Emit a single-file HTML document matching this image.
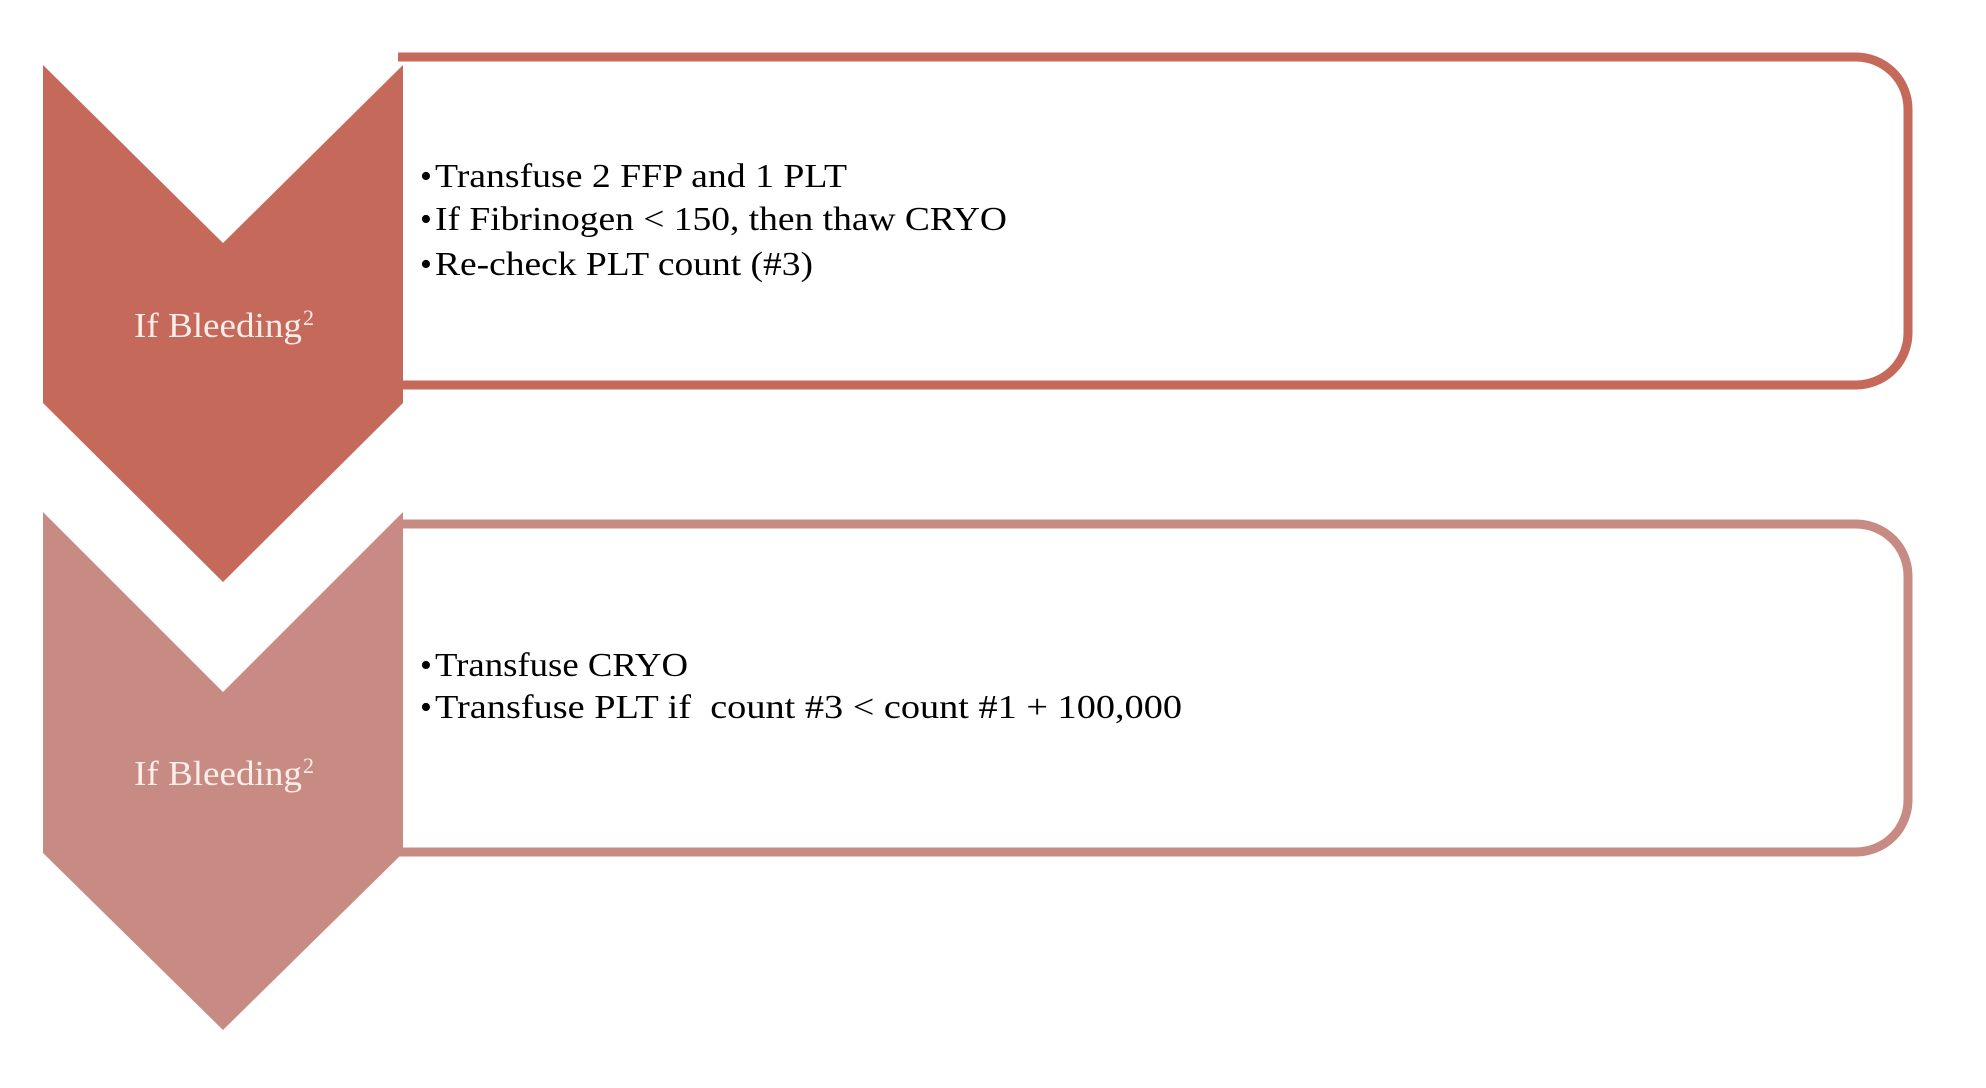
<!DOCTYPE html>
<html><head><meta charset="utf-8"><style>
html,body{margin:0;padding:0;background:#fff;}
svg{display:block;}
text{font-family:"Liberation Serif",serif;}
</style></head><body>
<svg width="1986" height="1088" viewBox="0 0 1986 1088" xmlns="http://www.w3.org/2000/svg">
  <path d="M398,57 H1856 A52,52 0 0 1 1908,109 V333 A52,52 0 0 1 1856,385 H398" fill="#fff" stroke="#c5695a" stroke-width="9"/>
  <path d="M398,524 H1856 A52,52 0 0 1 1908,576 V800 A52,52 0 0 1 1856,852 H398" fill="#fff" stroke="#c88b83" stroke-width="9"/>
  <polygon points="43,65 223,243 403,65 403,403 223,582 43,403" fill="#c5695a"/>
  <polygon points="43,512 223,692 403,512 403,853 223,1030 43,853" fill="#c88b83"/>

  <text x="134" y="337" font-size="35" fill="#fdeeea" textLength="168" lengthAdjust="spacingAndGlyphs">If Bleeding</text>
  <text x="303" y="325" font-size="22" fill="#fdeeea">2</text>
  <text x="134" y="785" font-size="35" fill="#fdeeea" textLength="168" lengthAdjust="spacingAndGlyphs">If Bleeding</text>
  <text x="303" y="773" font-size="22" fill="#fdeeea">2</text>

  <g font-size="34" fill="#000">
    <text x="420" y="187">•</text>
    <text x="435" y="187" textLength="412" lengthAdjust="spacingAndGlyphs">Transfuse 2 FFP and 1 PLT</text>
    <text x="420" y="230">•</text>
    <text x="435" y="230" textLength="572" lengthAdjust="spacingAndGlyphs">If Fibrinogen &lt; 150, then thaw CRYO</text>
    <text x="420" y="275">•</text>
    <text x="435" y="275" textLength="378" lengthAdjust="spacingAndGlyphs">Re-check PLT count (#3)</text>

    <text x="420" y="676">•</text>
    <text x="435" y="676" textLength="253" lengthAdjust="spacingAndGlyphs">Transfuse CRYO</text>
    <text x="420" y="718">•</text>
    <text x="435" y="718" textLength="747" lengthAdjust="spacingAndGlyphs">Transfuse PLT if &#160;count #3 &lt; count #1 + 100,000</text>
  </g>
</svg>
</body></html>
